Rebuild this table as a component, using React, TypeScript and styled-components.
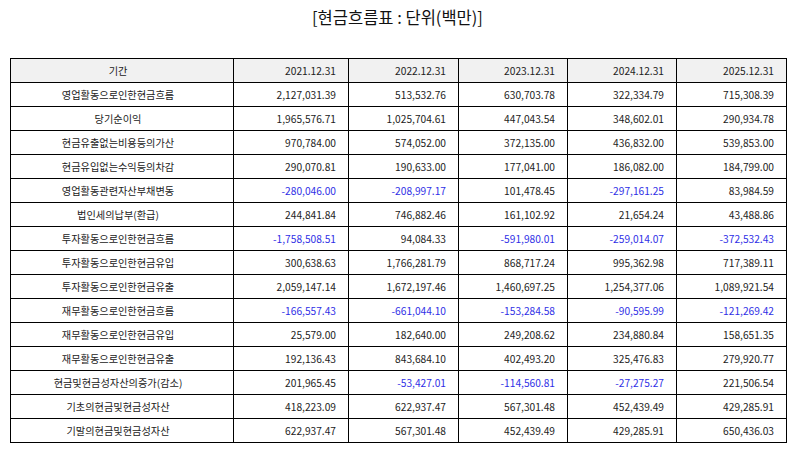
import React from 'react'
import styled, { createGlobalStyle } from 'styled-components'

const GlobalStyle = createGlobalStyle`
  body {
    margin: 0;
    background: #fff;
    font-family: "Noto Sans CJK KR", "Noto Sans", sans-serif;
  }
`

const Page = styled.div`
  width: 794px;
  height: 452px;
  padding: 0 9px 0 10px;
  box-sizing: border-box;
`

const Title = styled.h1`
  margin: 0;
  height: 58px;
  padding-top: 6px;
  box-sizing: border-box;
  font-size: 16.5px;
  font-weight: 400;
  line-height: 22px;
  text-align: center;
  color: #111;
`

const Table = styled.table`
  width: 776px;
  border-collapse: collapse;
  table-layout: fixed;
  font-size: 10.2px;
  color: #222;
`

const Cell = styled.td<{ $head?: boolean; $label?: boolean; $neg?: boolean }>`
  height: 23px;
  padding: 0 12px 0 4px;
  border: 1px solid #000;
  text-align: ${p => (p.$label ? 'center' : 'right')};
  background: ${p => (p.$head ? '#f1f1f1' : '#fff')};
  color: ${p => (p.$neg ? '#2f2fe6' : '#222')};
  font-weight: 400;
  white-space: nowrap;
`

const years = ['2021.12.31', '2022.12.31', '2023.12.31', '2024.12.31', '2025.12.31']

const rows: [string, string[]][] = [
  ['영업활동으로인한현금흐름', ['2,127,031.39', '513,532.76', '630,703.78', '322,334.79', '715,308.39']],
  ['당기순이익', ['1,965,576.71', '1,025,704.61', '447,043.54', '348,602.01', '290,934.78']],
  ['현금유출없는비용등의가산', ['970,784.00', '574,052.00', '372,135.00', '436,832.00', '539,853.00']],
  ['현금유입없는수익등의차감', ['290,070.81', '190,633.00', '177,041.00', '186,082.00', '184,799.00']],
  ['영업활동관련자산부채변동', ['-280,046.00', '-208,997.17', '101,478.45', '-297,161.25', '83,984.59']],
  ['법인세의납부(환급)', ['244,841.84', '746,882.46', '161,102.92', '21,654.24', '43,488.86']],
  ['투자활동으로인한현금흐름', ['-1,758,508.51', '94,084.33', '-591,980.01', '-259,014.07', '-372,532.43']],
  ['투자활동으로인한현금유입', ['300,638.63', '1,766,281.79', '868,717.24', '995,362.98', '717,389.11']],
  ['투자활동으로인한현금유출', ['2,059,147.14', '1,672,197.46', '1,460,697.25', '1,254,377.06', '1,089,921.54']],
  ['재무활동으로인한현금흐름', ['-166,557.43', '-661,044.10', '-153,284.58', '-90,595.99', '-121,269.42']],
  ['재무활동으로인한현금유입', ['25,579.00', '182,640.00', '249,208.62', '234,880.84', '158,651.35']],
  ['재무활동으로인한현금유출', ['192,136.43', '843,684.10', '402,493.20', '325,476.83', '279,920.77']],
  ['현금및현금성자산의증가(감소)', ['201,965.45', '-53,427.01', '-114,560.81', '-27,275.27', '221,506.54']],
  ['기초의현금및현금성자산', ['418,223.09', '622,937.47', '567,301.48', '452,439.49', '429,285.91']],
  ['기말의현금및현금성자산', ['622,937.47', '567,301.48', '452,439.49', '429,285.91', '650,436.03']],
]

const widths = [223, 115, 110, 109, 109, 110]

export default function App() {
  return (
    <Page>
      <GlobalStyle />
      <Title>[현금흐름표 : 단위(백만)]</Title>
      <Table>
        <colgroup>
          {widths.map((w, i) => (
            <col key={i} style={{ width: w }} />
          ))}
        </colgroup>
        <thead>
          <tr>
            <Cell as="th" $head $label>기간</Cell>
            {years.map(y => (
              <Cell as="th" key={y} $head>{y}</Cell>
            ))}
          </tr>
        </thead>
        <tbody>
          {rows.map(([label, vals]) => (
            <tr key={label}>
              <Cell $label>{label}</Cell>
              {vals.map((v, i) => (
                <Cell key={i} $neg={v.startsWith('-')}>{v}</Cell>
              ))}
            </tr>
          ))}
        </tbody>
      </Table>
    </Page>
  )
}
